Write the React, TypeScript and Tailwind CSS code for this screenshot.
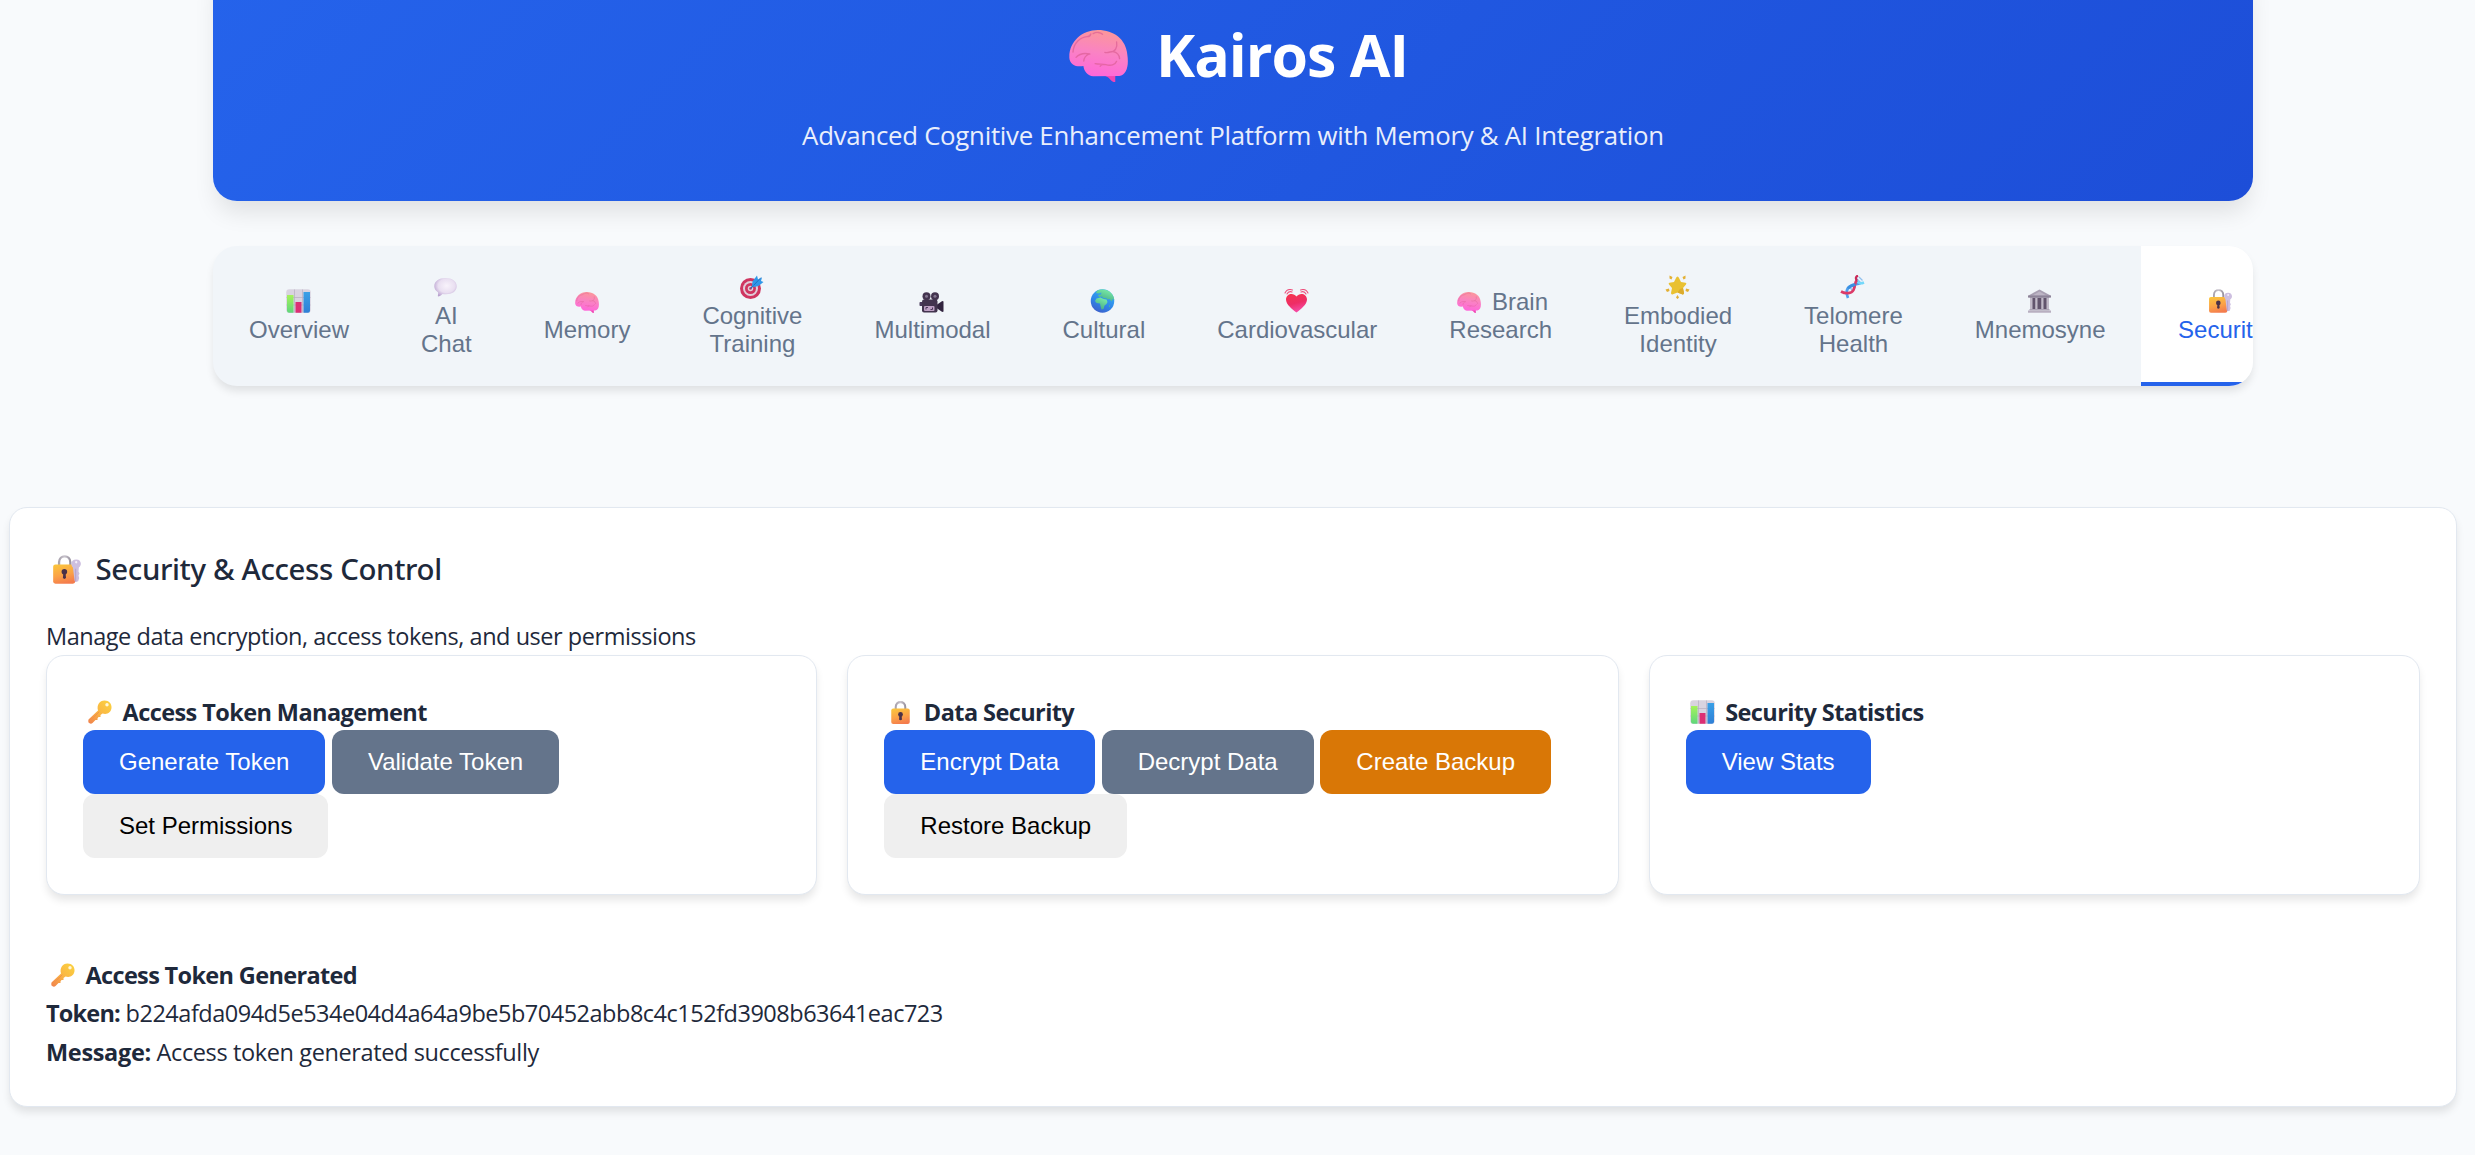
import React from "react";

type IconProps = { className?: string };

const Brain = ({ className }: IconProps) => (
  <svg viewBox="0 0 176 156" className={className} preserveAspectRatio="none">
    <defs>
      <linearGradient id="brainFill" x1="0.6" y1="0" x2="0.4" y2="1">
        <stop offset="0" stopColor="#fb9799" />
        <stop offset="0.5" stopColor="#fa82c4" />
        <stop offset="1" stopColor="#ff66da" />
      </linearGradient>
    </defs>
    <path d="M108 134 L138 134 L138 156 C133 157 128 155 125 151 C121 145 116 140 108 138Z" fill="#f044b4" />
    <path d="M1 83 C0 34 40 0 86 0 C134 0 170 28 174 74 C179 108 172 134 150 138 L72 139 C56 137 45 125 43 108 C22 112 2 104 1 83Z" fill="url(#brainFill)" />
    <g fill="none" stroke="#dd5f95" strokeWidth="4" strokeLinecap="round" opacity="0.7">
      <path d="M12 66 C14 38 34 22 54 20 C61 20 64 16 65 12" />
      <path d="M72 11 C82 5 94 7 100 13" />
      <path d="M142 36 C145 53 138 66 122 66 C116 68 111 69 107 67 M131 65 C144 67 150 76 151 86" />
      <path d="M21 82 C36 66 53 70 62 72 M44 93 C45 82 51 76 60 72" />
      <path d="M78 101 C90 104 99 101 110 104 C124 108 138 105 142 94 M103 103 C97 104 94 106 93 109" />
    </g>
  </svg>
);

const BarChart = ({ className }: IconProps) => (
  <svg viewBox="0 0 50 48" className={className}>
    <defs>
      <linearGradient id="barGreen" x1="0" y1="0" x2="0" y2="1">
        <stop offset="0" stopColor="#a5f25c" />
        <stop offset="1" stopColor="#5fd67c" />
      </linearGradient>
      <linearGradient id="barBlue" x1="0" y1="0" x2="0" y2="1">
        <stop offset="0" stopColor="#3aa0e6" />
        <stop offset="1" stopColor="#2f7fd6" />
      </linearGradient>
    </defs>
    <rect x="0.5" y="0.5" width="49" height="47" rx="6" fill="#d9d3e0" />
    <path d="M17 1V47M33 1V47M1 17H49M1 32H49" stroke="#b6adc0" strokeWidth="1.4" />
    <path d="M2 12H15V47.5H6Q2 47.5 2 43Z" fill="url(#barGreen)" />
    <rect x="19" y="26" width="12" height="21.5" fill="#dc2f74" />
    <path d="M35 6H48V43Q48 47.5 44 47.5H35Z" fill="url(#barBlue)" />
  </svg>
);

const Speech = ({ className }: IconProps) => (
  <svg viewBox="0 0 50 48" className={className}>
    <defs>
      <radialGradient id="speechFill" cx="0.55" cy="0.42" r="0.62">
        <stop offset="0" stopColor="#f8f3fb" />
        <stop offset="0.6" stopColor="#e9dff1" />
        <stop offset="1" stopColor="#b9a1cf" />
      </radialGradient>
    </defs>
    <path d="M25 6C38 6 47.500 12.500 47.500 22.500C47.500 32.500 38 38.500 26 38.500C23 38.500 21 38.500 19 38C16 40.500 13 42.500 10.500 43C9.500 42.500 9.500 41.500 10 39.500C10.500 37.500 10.500 36 10 34.500C5.500 31.500 2.500 27.500 2.500 22.500C2.500 12.500 12 6 25 6Z" fill="url(#speechFill)" />
  </svg>
);

const Target = ({ className }: IconProps) => (
  <svg viewBox="0 0 48 48" className={className}>
    <circle cx="22" cy="27" r="21" fill="#cf3560" />
    <circle cx="22" cy="27" r="15" fill="#e0cdd9" />
    <circle cx="22" cy="27" r="11" fill="#cf3560" />
    <circle cx="22" cy="27" r="5.500" fill="#e0cdd9" />
    <circle cx="22" cy="27" r="2.600" fill="#cf3560" />
    <path d="M22 27L36 12" stroke="#2468b8" strokeWidth="2.500" />
    <path d="M25 22L26 13L35 1L37 9L45 5L43 12L48 14L38 22L29 24Z" fill="#2f97e8" />
    <path d="M28 21L43 5" stroke="#1c64b4" strokeWidth="1.500" />
  </svg>
);

const Camera = ({ className }: IconProps) => (
  <svg viewBox="0 0 48 48" className={className}>
    <rect x="0" y="26" width="7" height="8" rx="1.500" fill="#4a3a5c" />
    <path d="M34 32L44 25Q48 23 48 26V44Q48 47 44 45L34 38Z" fill="#32243f" />
    <rect x="5" y="21" width="31" height="26" rx="4" fill="#43344f" />
    <circle cx="14" cy="14.500" r="8" fill="#43344f" />
    <circle cx="31" cy="14.500" r="8" fill="#43344f" />
    <circle cx="14" cy="14.500" r="3" fill="#82758f" />
    <circle cx="31" cy="14.500" r="3" fill="#82758f" />
    <rect x="9" y="34" width="21" height="10" rx="2" fill="#bd9fc3" />
    <path d="M13 41V37H17M22 41H26V37" stroke="#4f3b5e" strokeWidth="2" fill="none" />
  </svg>
);

const Globe = ({ className }: IconProps) => (
  <svg viewBox="0 0 48 48" className={className}>
    <defs>
      <linearGradient id="globeSea" x1="0.8" y1="0" x2="0.3" y2="1">
        <stop offset="0" stopColor="#38b6f6" />
        <stop offset="0.6" stopColor="#2f86e8" />
        <stop offset="1" stopColor="#3d5fcb" />
      </linearGradient>
      <linearGradient id="globeLand" x1="0.8" y1="0" x2="0.3" y2="1">
        <stop offset="0" stopColor="#7df0a8" />
        <stop offset="1" stopColor="#45a986" />
      </linearGradient>
    </defs>
    <circle cx="24" cy="24" r="23.500" fill="url(#globeSea)" />
    <path d="M13 3.500C18 1 27 -0.500 34 3C42 7 47 14 47.500 22L44 20L42 25L38 20L34 21L31 18L26 19L23 15L17 16L15 12L21 11L22 7L16 9L11 8Z" fill="url(#globeLand)" />
    <path d="M12 19L20 17L26 20L32 21L34 26L32 30L28 33L26 40L22 41L20 34L19 29L12 28L9 24Z" fill="url(#globeLand)" />
    <path d="M37 32L39 34L37 37Z" fill="#4fc18f" />
  </svg>
);

const BeatingHeart = ({ className }: IconProps) => (
  <svg viewBox="0 0 48 48" className={className}>
    <defs>
      <linearGradient id="heartFill" x1="0.3" y1="0" x2="0.6" y2="1">
        <stop offset="0" stopColor="#f5344f" />
        <stop offset="0.5" stopColor="#ee2d66" />
        <stop offset="1" stopColor="#f74fae" />
      </linearGradient>
    </defs>
    <path d="M24 47C15 40 3 31 3 21C3 9 18 6 24 15C30 6 45 9 45 21C45 31 33 40 24 47Z" fill="url(#heartFill)" />
    <g fill="none" stroke="#ee4f7c" strokeWidth="2.200" strokeLinecap="round">
      <path d="M1 8C4 2 10 0 16 2M5 10C7 6 11 4.500 15 6" />
      <path d="M47 8C44 2 38 0 32 2M43 10C41 6 37 4.500 33 6" />
    </g>
  </svg>
);

const Star = ({ className }: IconProps) => (
  <svg viewBox="0 0 48 48" className={className}>
    <path d="M24 3Q26 3 27 6L31 14L40 15.500Q43 16 41 19L35 26L37 36Q37 40 33 38.500L24 35L15 38.500Q11 40 11 36L13 26L7 19Q5 16 8 15.500L17 14L21 6Q22 3 24 3Z" fill="#e9c132" />
    <path d="M24 35L33 38.500Q37 40 37 36L35 26L29 28Z" fill="#dcab2c" />
    <path d="M8 1L14 4L12 9L8 7ZM40 1L34 4L36 9L40 7ZM0 29L7 27L8 32L3 34ZM48 29L41 27L40 32L45 34ZM24 40L27 45L24 48L21 45Z" fill="#e3b034" />
  </svg>
);

const Dna = ({ className }: IconProps) => (
  <svg viewBox="0 0 48 48" className={className} fill="none">
    <path d="M7 33L14 40M19 25L24 31M24 19L30 26M32 7L42 17M37 4L44 11" stroke="#8fc0ee" strokeWidth="2.500" />
    <path d="M15 46C10 36 12 26 20 22C27 18 33 19 40 16" stroke="#4fa0ee" strokeWidth="5.500" />
    <path d="M33 10C35 17 40 18 47 15" stroke="#74d8fa" strokeWidth="5" />
    <path d="M1 33C10 38 22 38 26 30C30 21 28 14 33 10" stroke="#dc3a68" strokeWidth="5.500" />
    <path d="M33 11C29 7 31 3 35 1" stroke="#c92a58" strokeWidth="4.500" />
    <path d="M15 27C18 22 24 21 30 19" stroke="#3b8fe0" strokeWidth="5" />
  </svg>
);

const Museum = ({ className }: IconProps) => (
  <svg viewBox="0 0 48 48" className={className}>
    <rect x="5" y="17" width="38" height="25" fill="#62546d" />
    <path d="M24 1L46 13V17H2V13Z" fill="#a89fb2" />
    <path d="M24 5L38 13H10Z" fill="#bdb5c5" />
    <path d="M1 13H47V17H1Z" fill="#8e8499" />
    <path d="M5 18H10V41H5ZM15.500 18H20V41H15.500ZM27.500 18H32V41H27.500ZM38 18H43V41H38Z" fill="#c2bac9" />
    <path d="M4 40H44V43H4Z" fill="#aca3b5" />
    <path d="M1 43H47V47.500H1Z" fill="#b8afc0" />
  </svg>
);

const LockDefs = () => (
  <defs>
    <linearGradient id="lockBody" x1="0.2" y1="0" x2="0.5" y2="1">
      <stop offset="0" stopColor="#fbc43c" />
      <stop offset="0.55" stopColor="#fba347" />
      <stop offset="1" stopColor="#f47c4d" />
    </linearGradient>
    <linearGradient id="lockShackle" x1="0" y1="0" x2="1" y2="0">
      <stop offset="0" stopColor="#a9a3ae" />
      <stop offset="0.5" stopColor="#c8c3cc" />
      <stop offset="1" stopColor="#9a94a0" />
    </linearGradient>
  </defs>
);

const LockKey = ({ className }: IconProps) => (
  <svg viewBox="0 0 84 88" className={className}>
    <LockDefs />
    <path d="M18 32V22C18 -2 52 -2 52 22V32" fill="none" stroke="url(#lockShackle)" strokeWidth="7" />
    <rect x="0" y="29" width="67" height="58" rx="7" fill="url(#lockBody)" />
    <path d="M60 38C52 30 54 14 70 14C86 14 88 32 78 38L77 50L80 56L77 62L79 70L76 80L68 82L65 78Z" fill="#cdbfe0" />
    <path d="M66 42V80L70 81V42Z" fill="#b8a7cf" />
    <circle cx="70" cy="22" r="3.500" fill="#f4effa" />
    <circle cx="34" cy="51" r="8.500" fill="#4a3148" />
    <path d="M31 54H37.500L39 70Q34 75 29.500 70Z" fill="#4a3148" />
  </svg>
);

const Lock = ({ className }: IconProps) => (
  <svg viewBox="0 0 38 46" className={className}>
    <LockDefs />
    <path d="M9.500 18V12C9.500 -1 28.500 -1 28.500 12V18" fill="none" stroke="url(#lockShackle)" strokeWidth="4.200" />
    <rect x="0.500" y="15" width="37" height="31" rx="4" fill="url(#lockBody)" />
    <circle cx="19" cy="27" r="4.800" fill="#4a3148" />
    <path d="M17 28H21L22 37Q19 40 16 37Z" fill="#4a3148" />
  </svg>
);

const Key = ({ className }: IconProps) => (
  <svg viewBox="0 0 48 48" className={className}>
    <defs>
      <linearGradient id="keyFill" x1="1" y1="0" x2="0" y2="1">
        <stop offset="0" stopColor="#fbd43f" />
        <stop offset="0.5" stopColor="#fab743" />
        <stop offset="1" stopColor="#f0804e" />
      </linearGradient>
    </defs>
    <path d="M20 21C17 10 23 1 33 1C42 1 48 8 47 16C46 25 38 30 29 27L25 30L25 34L21 34L19 37L19 40L15 40L9 46Q7 48 4 47L1 45Q0 42 1 39Z" fill="url(#keyFill)" />
    <path d="M4 42L22 24" stroke="#f3924a" strokeWidth="2" strokeLinecap="round" />
    <circle cx="38" cy="9.500" r="3.400" fill="#fff6d8" />
  </svg>
);

const tabIcon = "inline-block align-[-3px] ml-[3px] mr-[5px] h-[24px] w-[25px]";
const tabBrain = "inline-block align-[-3px] mx-1 h-[21px] w-[24px]";

const tabs = [
  { label: "Overview", icon: <BarChart className={tabIcon} /> },
  { label: "AI Chat", icon: <Speech className={tabIcon} /> },
  { label: "Memory", icon: <Brain className={tabBrain} /> },
  { label: "Cognitive Training", icon: <Target className={tabIcon} /> },
  { label: "Multimodal", icon: <Camera className={tabIcon} /> },
  { label: "Cultural", icon: <Globe className={tabIcon} /> },
  { label: "Cardiovascular", icon: <BeatingHeart className={tabIcon} /> },
  { label: "Brain Research", icon: <Brain className={tabBrain} /> },
  { label: "Embodied Identity", icon: <Star className={tabIcon} /> },
  { label: "Telomere Health", icon: <Dna className={tabIcon} /> },
  { label: "Mnemosyne", icon: <Museum className={tabIcon} /> },
  { label: "Security", icon: <LockKey className={tabIcon} />, active: true },
];

const tones = {
  primary: "bg-[#2563eb] text-white",
  secondary: "bg-[#64748b] text-white",
  warning: "bg-[#d97706] text-white",
  plain: "bg-[#efefef] text-black",
};

const Btn = ({ tone, children }: { tone: keyof typeof tones; children: React.ReactNode }) => (
  <button className={`h-16 rounded-xl px-9 font-['Liberation_Sans',sans-serif] text-[24px] leading-[28px] whitespace-nowrap ${tones[tone]}`}>
    {children}
  </button>
);

const Panel = ({ icon, title, children }: { icon: React.ReactNode; title: string; children: React.ReactNode }) => (
  <section className="h-[240px] rounded-[18px] border border-[#e2e8f0] bg-white p-9 shadow-[0_6px_9px_-1.5px_rgba(0,0,0,0.1)]">
    <h4 className="flex h-[38px] items-center pt-0.5 font-bold tracking-[-0.58px]">
      <span className="mr-[6.5px] flex w-[33px] justify-center">{icon}</span>
      {title}
    </h4>
    <div className="flex flex-wrap gap-x-[6.6px]">{children}</div>
  </section>
);

export default function App() {
  return (
    <div className="flex h-[1155px] w-full flex-col overflow-hidden bg-[#f8fafc] font-['Open_Sans','Noto_Sans',sans-serif] text-[23.5px] leading-[38.4px] text-[#1e293b]">
      <header className="-mt-10 ml-[213px] flex h-[241px] w-[2040px] shrink-0 flex-col items-center rounded-[24px] bg-linear-135 from-[#2563eb] to-[#1d4ed8] pt-[46px] text-white shadow-[0_15px_23px_-4px_rgba(0,0,0,0.1)]">
        <h1 className="flex items-center text-[59px] leading-[96px] font-bold tracking-[-1px]">
          <span className="mr-4 flex w-[82px] justify-center pt-1">
            <Brain className="h-[52px] w-[59px]" />
          </span>
          Kairos AI
        </h1>
        <p className="mt-3 text-[25.8px] leading-[42px] tracking-[-0.27px] opacity-90">
          Advanced Cognitive Enhancement Platform with Memory &amp; AI Integration
        </p>
      </header>

      <nav className="mt-[45px] ml-[213px] flex h-[140px] w-[2040px] shrink-0 overflow-hidden rounded-[24px] bg-[#f1f5f9] font-['Liberation_Sans',sans-serif] text-[24px] leading-[28px] shadow-[0_6px_9px_-1.5px_rgba(0,0,0,0.1)]">
        {tabs.map((t) => (
          <button
            key={t.label}
            className={
              t.active
                ? "-ml-px flex shrink-0 items-center bg-white pr-9 pl-[37.5px] text-[#2563eb] shadow-[inset_0_-4px_0_#2563eb]"
                : "flex shrink-0 items-center px-9 text-[#64748b]"
            }
          >
            <span className="block w-min text-center">
              {t.icon} {t.label}
            </span>
          </button>
        ))}
      </nav>

      <main className="mt-[121px] ml-[9px] h-[600px] w-[2448px] shrink-0 rounded-[18px] border border-[#e2e8f0] bg-white p-9 shadow-[0_6px_9px_-1.5px_rgba(0,0,0,0.1)]">
        <h3 className="mb-[25px] flex h-12 items-center pt-0.5 font-['Noto_Sans',sans-serif] text-[29.4px] leading-[46px] font-medium tracking-[-0.36px]">
          <span className="mr-[8.5px] flex w-[41px] justify-center">
            <LockKey className="h-[29px] w-[28px]" />
          </span>
          Security &amp; Access Control
        </h3>
        <p className="h-[38px] tracking-[-0.46px]">Manage data encryption, access tokens, and user permissions</p>

        <div className="grid grid-cols-3 gap-[30px]">
          <Panel icon={<Key className="size-[24px]" />} title="Access Token Management">
            <Btn tone="primary">Generate Token</Btn>
            <Btn tone="secondary">Validate Token</Btn>
            <div className="w-full">
              <Btn tone="plain">Set Permissions</Btn>
            </div>
          </Panel>
          <Panel icon={<Lock className="h-[23px] w-[19px]" />} title="Data Security">
            <Btn tone="primary">Encrypt Data</Btn>
            <Btn tone="secondary">Decrypt Data</Btn>
            <Btn tone="warning">Create Backup</Btn>
            <Btn tone="plain">Restore Backup</Btn>
          </Panel>
          <Panel icon={<BarChart className="h-[24px] w-[25px]" />} title="Security Statistics">
            <Btn tone="primary">View Stats</Btn>
          </Panel>
        </div>

        <div className="mt-[61px]">
          <h4 className="flex items-center font-bold tracking-[-0.66px]">
            <span className="mr-[6.5px] flex w-[33px] justify-center">
              <Key className="size-[24px]" />
            </span>
            Access Token Generated
          </h4>
          <p className="tracking-[-0.49px]">
            <strong className="font-bold tracking-[-0.8px]">Token:</strong> b224afda094d5e534e04d4a64a9be5b70452abb8c4c152fd3908b63641eac723
          </p>
          <p className="tracking-[-0.38px]">
            <strong className="font-bold tracking-[-0.33px]">Message:</strong> Access token generated successfully
          </p>
        </div>
      </main>
    </div>
  );
}
